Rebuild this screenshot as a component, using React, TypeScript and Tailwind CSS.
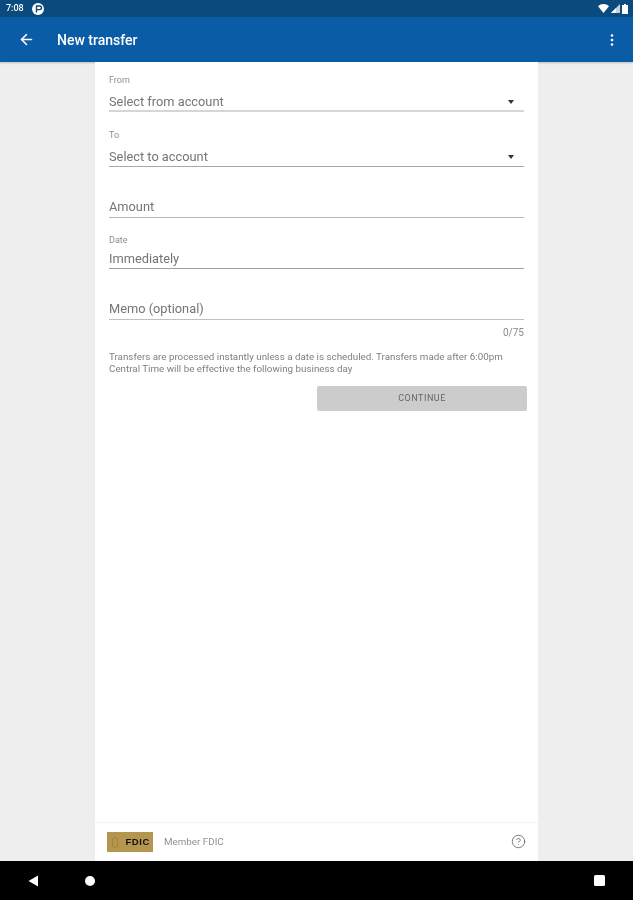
import { ArrowLeft, CircleHelp } from 'lucide-react';

type FieldProps = {
  label?: string;
  value: string;
  top: string;
  textGap?: string;
  lineGap?: string;
  line?: string;
  caret?: boolean;
};

function Field({ label, value, top, textGap = 'mt-[8px]', lineGap = 'mt-[2px]', line = 'h-px bg-[#b5b5b5]', caret = false }: FieldProps) {
  return (
    <div className={top}>
      {label && <div className="h-[11px] text-[9px] leading-[11px] text-[#8f8f8f]">{label}</div>}
      <div className={`${label ? textGap : ''} flex h-[16px] items-center justify-between pr-[10px] text-[12.8px] leading-[16px] text-[#757575]`}>
        <span>{value}</span>
        {caret && <span className="h-0 w-0 border-x-[3.5px] border-t-[4px] border-x-transparent border-t-[#333333]" />}
      </div>
      <div className={`${lineGap} ${line}`} />
    </div>
  );
}

export default function App() {
  return (
    <div className="flex h-[900px] w-[633px] flex-col overflow-hidden bg-[#eeeeee] font-['Roboto',sans-serif] blur-[0.4px]">
      {/* Status bar */}
      <div className="flex h-[17px] items-center justify-between bg-[#0a4a7c] pl-[6px] pr-[5px] text-white">
        <div className="flex items-center gap-[8px]">
          <span className="text-[9px] font-medium leading-none">7:08</span>
          <svg width="12" height="12" viewBox="0 0 12 12">
            <circle cx="6" cy="6" r="6" fill="#ffffff" />
            <path d="M4.5 9.5V3h3.2a1.8 1.8 0 0 1 0 3.6H4.5" fill="none" stroke="#0a4a7c" strokeWidth="1.4" />
          </svg>
        </div>
        <div className="flex items-center gap-[2px]">
          <svg width="11" height="9" viewBox="0 0 11 9"><path d="M0 2.2C3 -0.6 8 -0.6 11 2.2L5.5 9Z" fill="#ffffff" /></svg>
          <svg width="9" height="9" viewBox="0 0 9 9"><path d="M9 0V9H0Z" fill="#c4d2de" /><path d="M5 4V9H0Z" fill="#ffffff" /></svg>
          <svg width="6" height="10" viewBox="0 0 6 10"><path d="M2 0H4V1H6V10H0V1H2Z" fill="#ffffff" /></svg>
        </div>
      </div>

      {/* Toolbar */}
      <div className="flex h-[45px] items-center justify-between bg-[#0a5ca6] pl-[18px] pr-[19px] text-white shadow-[0_1px_2px_rgba(0,0,0,0.2)]">
        <div className="flex items-center gap-[22px]">
          <ArrowLeft size={17} strokeWidth={2.2} />
          <span className="text-[14px] font-medium leading-none">New transfer</span>
        </div>
        <svg width="4" height="12" viewBox="0 0 4 12" fill="#ffffff">
          <circle cx="2" cy="1.5" r="1.3" />
          <circle cx="2" cy="6" r="1.3" />
          <circle cx="2" cy="10.5" r="1.3" />
        </svg>
      </div>

      {/* Form card */}
      <div className="mx-auto flex w-[443px] flex-1 flex-col bg-white">
        <div className="flex-1 px-[14px]">
          <Field top="mt-[13px]" label="From" value="Select from account" caret lineGap="mt-0" line="h-[2px] bg-[#d6d6d6]" />
          <Field top="mt-[18px]" label="To" value="Select to account" caret lineGap="mt-[1px]" line="h-px bg-[#a8a8a8]" />
          <Field top="mt-[32px]" value="Amount" />
          <Field top="mt-[17px]" label="Date" value="Immediately" textGap="mt-[5px]" lineGap="mt-[1px]" line="h-px bg-[#a0a0a0]" />
          <Field top="mt-[32px]" value="Memo (optional)" line="h-px bg-[#c0c0c0]" />
          <div className="mt-[7px] text-right text-[10px] leading-[12px] text-[#8a8a8a]">0/75</div>
          <p className="mt-[12px] whitespace-nowrap text-[9.8px] leading-[12px] text-[#808080]">
            Transfers are processed instantly unless a date is scheduled. Transfers made after 6:00pm
            <br />
            Central Time will be effective the following business day
          </p>
          <div className="-mr-[3px] mt-[11px] flex justify-end">
            <button className="h-[25px] w-[210px] rounded-[2px] bg-[#cccccc] pt-[1px] text-[9px] tracking-[0.5px] text-[#666666]">
              CONTINUE
            </button>
          </div>
        </div>

        {/* Footer */}
        <div className="flex h-[39px] items-center justify-between border-t border-[#f4f4f4] px-[12px]">
          <div className="flex items-center gap-[11px]">
            <div className="flex h-[20px] w-[46px] items-center justify-between bg-[#b5964f] pl-[5px] pr-[3px] font-['Liberation_Sans',sans-serif] text-[9.5px] font-bold leading-none tracking-[0.6px] text-[#111111]">
              <span className="h-[11px] w-[6px] rounded-[3px] border border-[#a0853f]" />
              FDIC
            </div>
            <span className="text-[9.8px] text-[#909090]">Member FDIC</span>
          </div>
          <CircleHelp size={15} strokeWidth={1.4} className="-mt-[1px] text-[#6b6b6b]" />
        </div>
      </div>

      {/* Nav bar */}
      <div className="flex h-[39px] items-center bg-black px-[28px]">
        <svg width="11" height="12" viewBox="0 0 11 12"><path d="M10 0.5V11.5L0.5 6Z" fill="#ffffff" /></svg>
        <div className="ml-[46px] h-[10px] w-[10px] rounded-full bg-white" />
        <div className="ml-auto h-[11px] w-[11px] rounded-[1.5px] bg-white" />
      </div>
    </div>
  );
}
